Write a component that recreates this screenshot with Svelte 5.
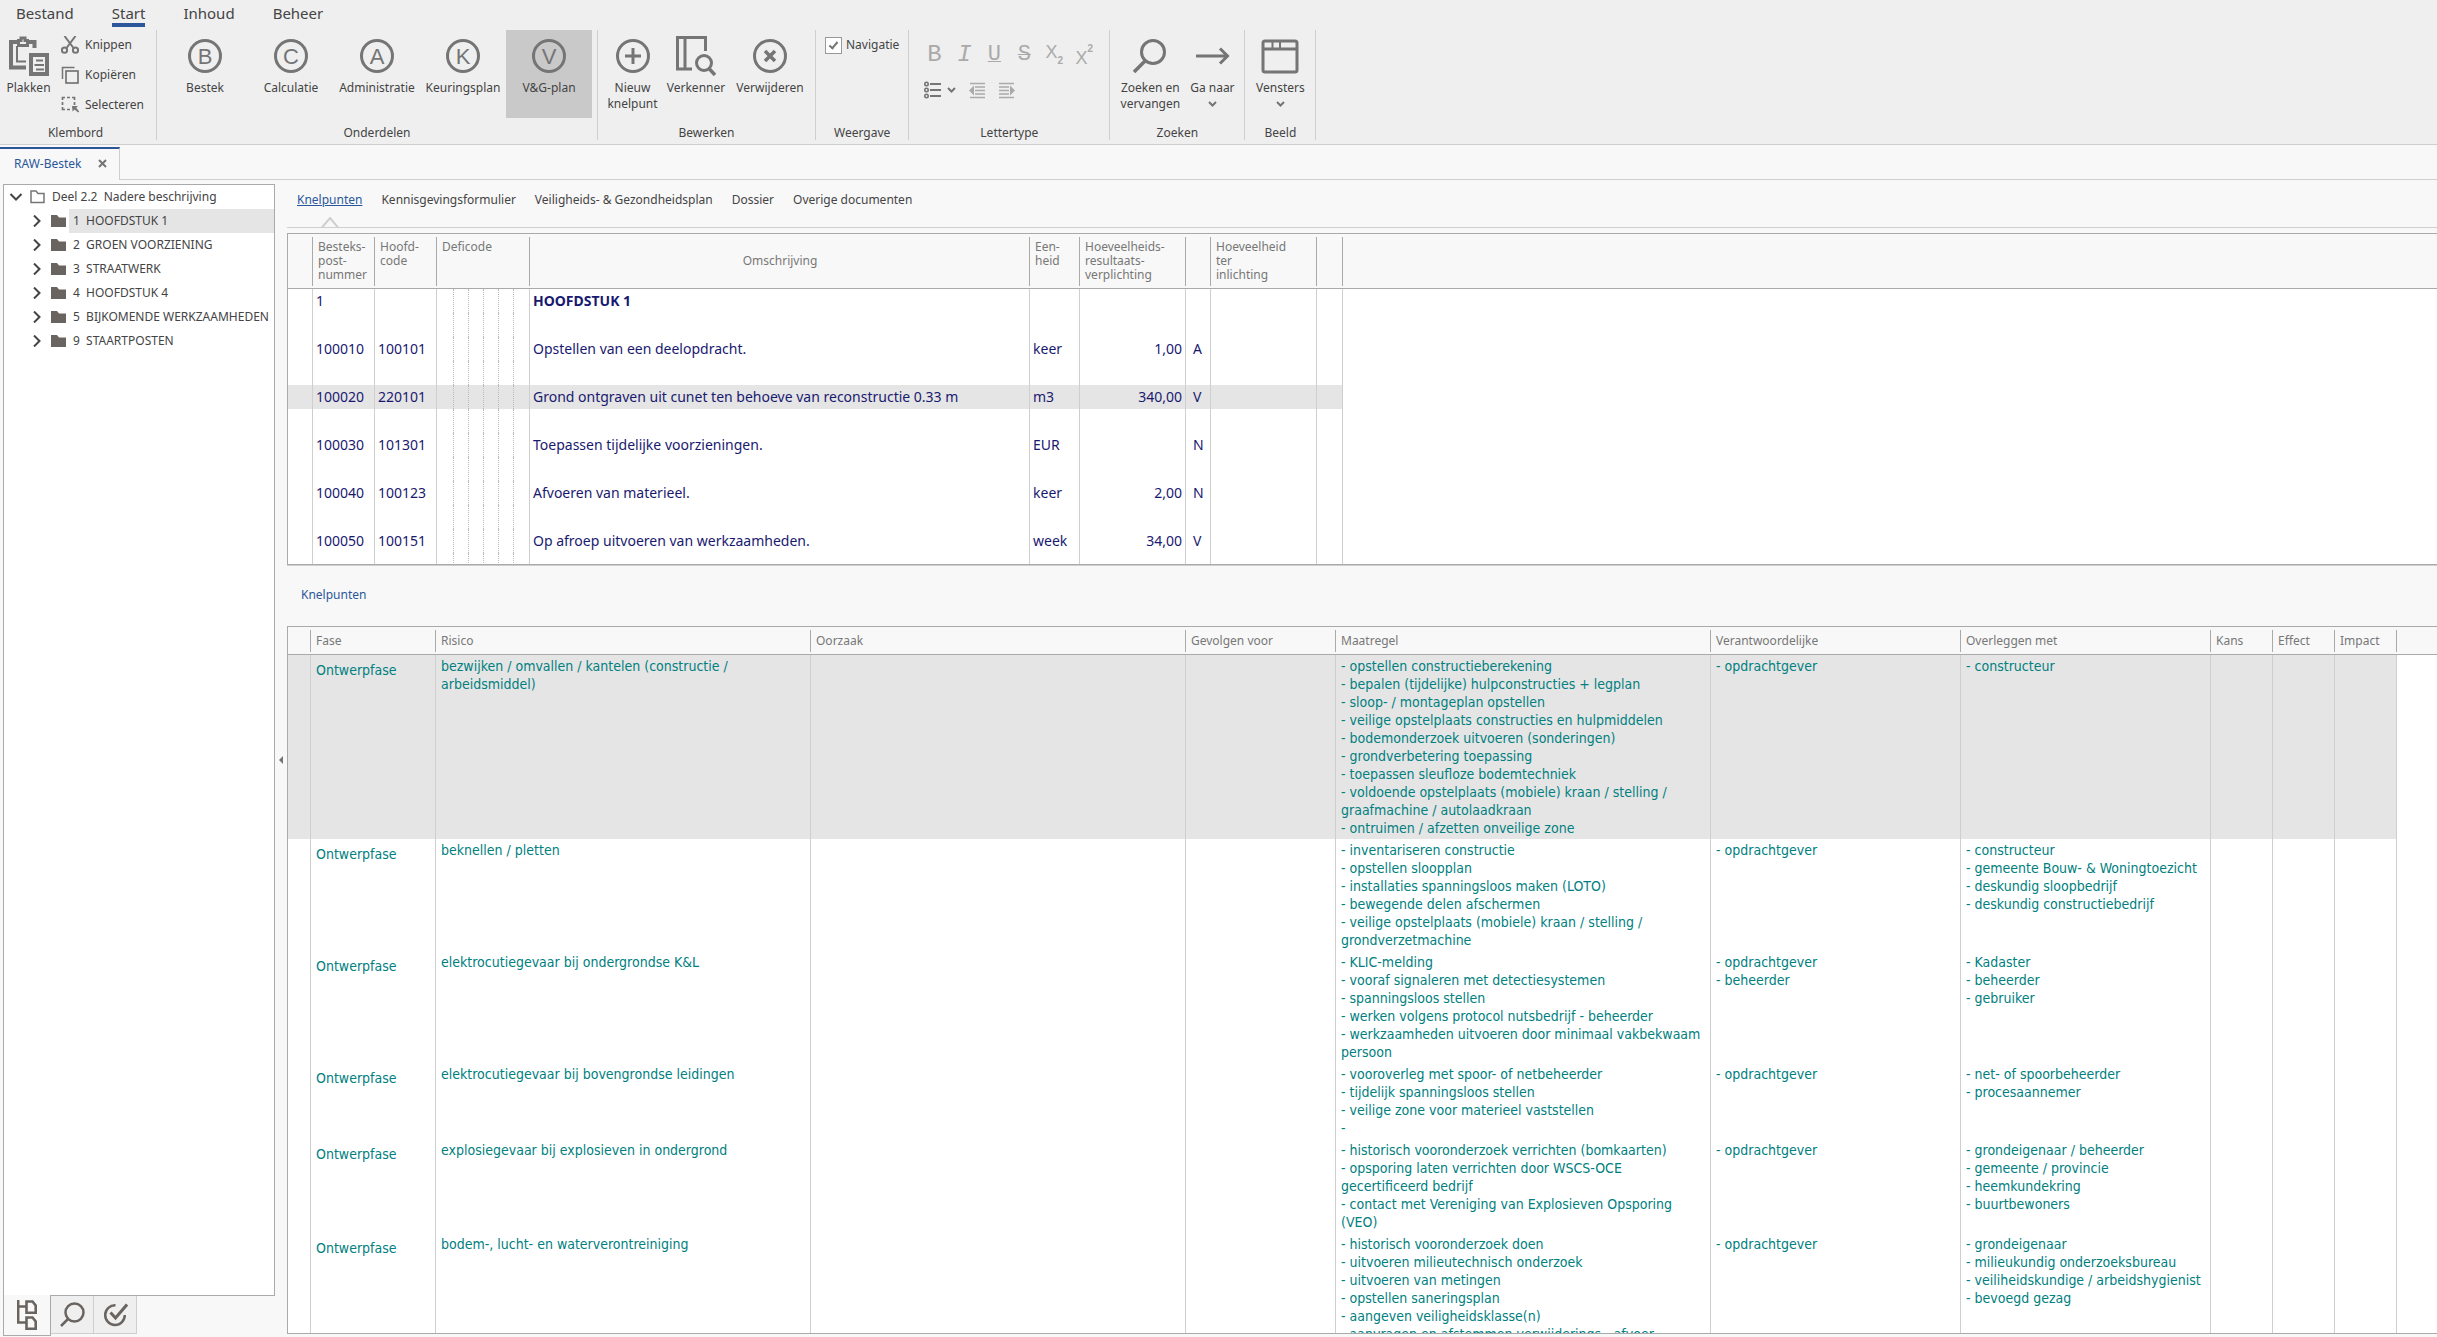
<script>
  const menu = ['Bestand', 'Start', 'Inhoud', 'Beheer'];
  const parts = [
    { letter: 'B', label: 'Bestek' },
    { letter: 'C', label: 'Calculatie' },
    { letter: 'A', label: 'Administratie' },
    { letter: 'K', label: 'Keuringsplan' },
    { letter: 'V', label: 'V&G-plan' }
  ];
  const chapters = [
    ['1', 'HOOFDSTUK 1'],
    ['2', 'GROEN VOORZIENING'],
    ['3', 'STRAATWERK'],
    ['4', 'HOOFDSTUK 4'],
    ['5', 'BIJKOMENDE WERKZAAMHEDEN'],
    ['9', 'STAARTPOSTEN']
  ];
  const sections = ['Knelpunten', 'Kennisgevingsformulier', 'Veiligheids- & Gezondheidsplan', 'Dossier', 'Overige documenten'];

  const postWidths = [25, 62, 62, 17, 15, 15, 15, 15, 16, 500, 50, 106, 25, 106, 26];
  const posts = [
    { nr: '1', code: '', text: 'HOOFDSTUK 1', unit: '', qty: '', kind: '', head: true },
    { nr: '100010', code: '100101', text: 'Opstellen van een deelopdracht.', unit: 'keer', qty: '1,00', kind: 'A' },
    { nr: '100020', code: '220101', text: 'Grond ontgraven uit cunet ten behoeve van reconstructie 0.33 m', unit: 'm3', qty: '340,00', kind: 'V' },
    { nr: '100030', code: '101301', text: 'Toepassen tijdelijke voorzieningen.', unit: 'EUR', qty: '', kind: 'N' },
    { nr: '100040', code: '100123', text: 'Afvoeren van materieel.', unit: 'keer', qty: '2,00', kind: 'N' },
    { nr: '100050', code: '100151', text: 'Op afroep uitvoeren van werkzaamheden.', unit: 'week', qty: '34,00', kind: 'V' }
  ];
  let selectedPost = $state('100020');

  const riskWidths = [23, 125, 375, 375, 150, 375, 250, 250, 62, 62, 62];
  const riskHeads = ['', 'Fase', 'Risico', 'Oorzaak', 'Gevolgen voor', 'Maatregel', 'Verantwoordelijke', 'Overleggen met', 'Kans', 'Effect', 'Impact'];
  const risks = [
    {
      risk: 'bezwijken / omvallen / kantelen (constructie / arbeidsmiddel)',
      measures: ['- opstellen constructieberekening', '- bepalen (tijdelijke) hulpconstructies + legplan', '- sloop- / montageplan opstellen', '- veilige opstelplaats constructies en hulpmiddelen', '- bodemonderzoek uitvoeren (sonderingen)', '- grondverbetering toepassing', '- toepassen sleufloze bodemtechniek', '- voldoende opstelplaats (mobiele) kraan / stelling / graafmachine / autolaadkraan', '- ontruimen / afzetten onveilige zone'],
      owners: ['- opdrachtgever'],
      consult: ['- constructeur']
    },
    {
      risk: 'beknellen / pletten',
      measures: ['- inventariseren constructie', '- opstellen sloopplan', '- installaties spanningsloos maken (LOTO)', '- bewegende delen afschermen', '- veilige opstelplaats (mobiele) kraan / stelling / grondverzetmachine'],
      owners: ['- opdrachtgever'],
      consult: ['- constructeur', '- gemeente Bouw- & Woningtoezicht', '- deskundig sloopbedrijf', '- deskundig constructiebedrijf']
    },
    {
      risk: 'elektrocutiegevaar bij ondergrondse K&L',
      measures: ['- KLIC-melding', '- vooraf signaleren met detectiesystemen', '- spanningsloos stellen', '- werken volgens protocol nutsbedrijf - beheerder', '- werkzaamheden uitvoeren door minimaal vakbekwaam persoon'],
      owners: ['- opdrachtgever', '- beheerder'],
      consult: ['- Kadaster', '- beheerder', '- gebruiker']
    },
    {
      risk: 'elektrocutiegevaar bij bovengrondse leidingen',
      measures: ['- vooroverleg met spoor- of netbeheerder', '- tijdelijk spanningsloos stellen', '- veilige zone voor materieel vaststellen', '-'],
      owners: ['- opdrachtgever'],
      consult: ['- net- of spoorbeheerder', '- procesaannemer']
    },
    {
      risk: 'explosiegevaar bij explosieven in ondergrond',
      measures: ['- historisch vooronderzoek verrichten (bomkaarten)', '- opsporing laten verrichten door WSCS-OCE gecertificeerd bedrijf', '- contact met Vereniging van Explosieven Opsporing (VEO)'],
      owners: ['- opdrachtgever'],
      consult: ['- grondeigenaar / beheerder', '- gemeente / provincie', '- heemkundekring', '- buurtbewoners']
    },
    {
      risk: 'bodem-, lucht- en waterverontreiniging',
      measures: ['- historisch vooronderzoek doen', '- uitvoeren milieutechnisch onderzoek', '- uitvoeren van metingen', '- opstellen saneringsplan', '- aangeven veiligheidsklasse(n)', '- aanvragen en afstemmen verwijderings-, afvoer'],
      owners: ['- opdrachtgever'],
      consult: ['- grondeigenaar', '- milieukundig onderzoeksbureau', '- veiliheidskundige / arbeidshygienist', '- bevoegd gezag']
    }
  ];
  let selectedRisk = $state(0);
  let showNav = $state(true);
</script>

{#snippet down()}
  <svg class="down" width="9" height="6" viewBox="0 0 9 6"><path d="M1 1l3.500 3.500L8 1" stroke-width="2" /></svg>
{/snippet}

<div class="app">
  <header class="ribbon">
    <nav class="menu">
      {#each menu as item}
        <button class:active={item === 'Start'}>{item}</button>
      {/each}
    </nav>

    <div class="groups">
      <section class="group">
        <div class="tools">
          <button class="big paste">
            <svg width="40" height="40" viewBox="0 0 40 40">
              <path d="M17 31.500H2V6H8M19 6h6.500V12" stroke-width="4" />
              <path d="M8 10v15.500H17" stroke-width="2" />
              <path d="M9.500 9.500V4.500H12V2h4v2.500h2.500V9.500z" stroke-width="3" />
              <rect x="22" y="19" width="16" height="19" stroke-width="4" />
              <path d="M27 24.500h7M25.500 29h9.500M27 33.500h8" stroke-width="2" />
            </svg>
            <span>Plakken</span>
          </button>
          <div class="list">
            <button>
              <svg width="18" height="18" viewBox="0 0 18 18">
                <path d="M3.500 0l9 12M14.500 0l-9 12" stroke-width="2" />
                <circle cx="3.500" cy="14.200" r="2.600" stroke-width="2" /><circle cx="14.500" cy="14.200" r="2.600" stroke-width="2" />
              </svg>
              <span>Knippen</span>
            </button>
            <button>
              <svg width="18" height="18" viewBox="0 0 18 18">
                <path d="M1.500 13V1.500h12" stroke-width="1.500" /><rect x="5" y="5" width="12" height="12" stroke-width="1.700" />
              </svg>
              <span>Kopiëren</span>
            </button>
            <button>
              <svg width="18" height="18" viewBox="0 0 18 18">
                <path d="M1.500 4V1.500h2.500M6 1.500h3M11 1.500h2.500v2.500M13.500 6v3M1.500 6v3M1.500 11v2.500h2.500M6 13.500h3" stroke-width="1.700" />
                <path class="solid" d="M11 10h6l-1.800 1.800 3 3.800-1 1-3.600-3.200-2 2z" />
              </svg>
              <span>Selecteren</span>
            </button>
          </div>
        </div>
        <h2>Klembord</h2>
      </section>

      <section class="group">
        <div class="tools">
          {#each parts as part}
            <button class="big part" class:chosen={part.letter === 'V'}>
              <svg width="40" height="40" viewBox="0 0 40 40">
                <circle cx="20" cy="20" r="15.500" stroke-width="3" />
                <text x="20" y="27.500" text-anchor="middle">{part.letter}</text>
              </svg>
              <span>{part.label}</span>
            </button>
          {/each}
        </div>
        <h2>Onderdelen</h2>
      </section>

      <section class="group">
        <div class="tools">
          <button class="big create">
            <svg width="40" height="40" viewBox="0 0 40 40">
              <circle cx="20" cy="20" r="15.500" stroke-width="3" /><path d="M20 12v16M12 20h16" stroke-width="3" />
            </svg>
            <span>Nieuw knelpunt</span>
          </button>
          <button class="big explore">
            <svg width="40" height="40" viewBox="0 0 40 40">
              <path d="M16 33H1.500V1.500h28V15M9 2v31" stroke-width="3" />
              <circle cx="28" cy="27" r="7.500" stroke-width="3" /><path d="M33 32.500l6 6.500" stroke-width="3.500" />
            </svg>
            <span>Verkenner</span>
          </button>
          <button class="big remove">
            <svg width="40" height="40" viewBox="0 0 40 40">
              <circle cx="20" cy="20" r="15.500" stroke-width="3" /><path d="M15 15l10 10M25 15L15 25" stroke-width="3.500" />
            </svg>
            <span>Verwijderen</span>
          </button>
        </div>
        <h2>Bewerken</h2>
      </section>

      <section class="group">
        <div class="tools">
          <label class="check">
            <input type="checkbox" bind:checked={showNav} />
            <span>Navigatie</span>
          </label>
        </div>
        <h2>Weergave</h2>
      </section>

      <section class="group">
        <div class="tools fonts">
          <div class="row letters">
            <button>B</button>
            <button><i>I</i></button>
            <button class="under">U</button>
            <button class="strike">S</button>
            <button class="thin">X<sub>2</sub></button>
            <button class="thin low">X<sup>2</sup></button>
          </div>
          <div class="row lists">
            <button aria-label="Opsomming">
              <svg width="17" height="18" viewBox="0 0 17 18">
                <circle cx="2.500" cy="3" r="1.700" stroke-width="1.600" /><circle cx="2.500" cy="9" r="1.700" stroke-width="1.600" /><circle cx="2.500" cy="15" r="1.700" stroke-width="1.600" />
                <path d="M6 3h11M6 9h11M6 15h11" stroke-width="2" />
              </svg>
              {@render down()}
            </button>
            <button class="pale" aria-label="Minder inspringen">
              <svg width="17" height="17" viewBox="0 0 17 17">
                <path d="M1 1.500h15M6 5h10M6 8.500h10M6 12h10M1 15.500h15" stroke-width="1.600" /><path class="solid" d="M5 3.500v10L0 8.500z" />
              </svg>
            </button>
            <button class="pale" aria-label="Meer inspringen">
              <svg width="17" height="17" viewBox="0 0 17 17">
                <path d="M0 1.500h15M0 5h10M0 8.500h10M0 12h10M0 15.500h15" stroke-width="1.600" /><path class="solid" d="M11 3.500v10l5-5z" />
              </svg>
            </button>
          </div>
        </div>
        <h2>Lettertype</h2>
      </section>

      <section class="group">
        <div class="tools">
          <button class="big find">
            <svg width="40" height="40" viewBox="0 0 40 40">
              <circle cx="23" cy="16" r="11.500" stroke-width="3" /><path d="M15 25L4 36" stroke-width="3.500" />
            </svg>
            <span>Zoeken en vervangen</span>
          </button>
          <button class="big goto">
            <svg width="40" height="40" viewBox="0 0 40 40">
              <path d="M4 20h31M28 12.500l7.500 7.500-7.500 7.500" stroke-width="3" />
            </svg>
            <span>Ga naar</span>
            {@render down()}
          </button>
        </div>
        <h2>Zoeken</h2>
      </section>

      <section class="group">
        <div class="tools">
          <button class="big windows">
            <svg width="40" height="40" viewBox="0 0 40 40">
              <rect x="3" y="5" width="34" height="31" rx="2" stroke-width="3" /><path d="M3 13h34" stroke-width="3" /><path d="M12.500 5v7M20 5v7" stroke-width="2" />
            </svg>
            <span>Vensters</span>
            {@render down()}
          </button>
        </div>
        <h2>Beeld</h2>
      </section>
    </div>
  </header>

  <div class="doctabs">
    <div class="doctab">
      <a href="#bestek">RAW-Bestek</a>
      <button aria-label="Sluiten"><svg width="9" height="9" viewBox="0 0 9 9"><path d="M1 1l7 7M8 1L1 8" stroke-width="2" /></svg></button>
    </div>
  </div>

  <div class="work">
    <aside>
      <div class="tree">
        <button class="node root">
          <svg class="dark" width="14" height="8" viewBox="0 0 14 8"><path d="M1.500 1L7 6.500 12.500 1" stroke-width="2" /></svg>
          <svg width="15" height="14" viewBox="0 0 15 14"><path d="M1 12.500V1h5l2 2.500h6v9z" stroke-width="1.500" /></svg>
          <span class="name">Deel 2.2&nbsp; Nadere beschrijving</span>
        </button>
        {#each chapters as [nr, name]}
          <button class="node">
            <svg class="dark" width="8" height="12" viewBox="0 0 8 12"><path d="M1 .5L6.500 6 1 11.500" stroke-width="2" /></svg>
            <svg class="filled" width="15" height="12" viewBox="0 0 15 12"><path d="M0 12V0h6l2 2.500h7V12z" /></svg>
            <span class="name" class:on={nr === '1'}>{nr}&nbsp; {name}</span>
          </button>
        {/each}
      </div>
      <div class="views">
        <button class="front" aria-label="Structuur">
          <svg width="20" height="30" viewBox="0 0 20 30">
            <path d="M1.200 0v22.500H9M1.200 6.500H9" stroke-width="2.500" />
            <path d="M9.500 1.500h6l3.200 4v7.200H9.500zM9.500 17.500h6l3.200 4v7.200H9.500z" stroke-width="2.600" />
          </svg>
        </button>
        <button aria-label="Zoeken">
          <svg width="25" height="25" viewBox="0 0 25 25"><circle cx="14.500" cy="10.500" r="9" stroke-width="2.500" /><path d="M8 17l-7 7" stroke-width="2.500" /></svg>
        </button>
        <button aria-label="Controle">
          <svg width="25" height="25" viewBox="0 0 25 25"><path d="M12.500 3.300A9.800 9.800 0 1 0 21.800 13" stroke-width="2.500" /><path d="M7.500 10.500l5 5.500L24 2.500" stroke-width="3" /></svg>
        </button>
      </div>
    </aside>

    <div class="split"><svg width="4" height="8" viewBox="0 0 4 8"><path class="solid" d="M4 0v8L0 4z" /></svg></div>

    <main>
      <nav class="sections">
        {#each sections as name}
          <a href="#sectie" class:current={name === 'Knelpunten'}>
            {name}
            {#if name === 'Knelpunten'}
              <svg class="notch" width="18" height="11" viewBox="0 0 18 11"><path d="M1 10.500L9 1l8 9.500" /></svg>
            {/if}
          </a>
        {/each}
      </nav>

      <div class="grid posts">
        <table>
          <colgroup>
            {#each postWidths as w}<col style="width:{w}px" />{/each}
            <col />
          </colgroup>
          <thead>
            <tr>
              <th></th><th>Besteks-<br />post-<br />nummer</th><th>Hoofd-<br />code</th><th colspan="6">Deficode</th>
              <th class="mid">Omschrijving</th><th>Een-<br />heid</th><th>Hoeveelheids-<br />resultaats-<br />verplichting</th><th></th>
              <th>Hoeveelheid<br />ter<br />inlichting</th><th></th><th class="rest"></th>
            </tr>
          </thead>
          <tbody>
            {#each posts as p}
              <tr class:selected={p.nr === selectedPost} onclick={() => (selectedPost = p.nr)}>
                <td></td><td>{p.nr}</td><td>{p.code}</td>
                <td class="dot"></td><td class="dot"></td><td class="dot"></td><td class="dot"></td><td class="dot"></td><td></td>
                <td class:strong={p.head}>{p.text}</td><td>{p.unit}</td><td class="num">{p.qty}</td><td class="kind">{p.kind}</td><td></td><td></td><td class="rest"></td>
              </tr>
              <tr>
                <td></td><td></td><td></td>
                <td class="dot"></td><td class="dot"></td><td class="dot"></td><td class="dot"></td><td class="dot"></td><td></td>
                <td></td><td></td><td></td><td></td><td></td><td></td><td class="rest"></td>
              </tr>
            {/each}
          </tbody>
        </table>
      </div>

      <h3>Knelpunten</h3>

      <div class="grid risks">
        <table>
          <colgroup>
            {#each riskWidths as w}<col style="width:{w}px" />{/each}
            <col />
          </colgroup>
          <thead>
            <tr>
              {#each riskHeads as h}<th>{h}</th>{/each}
              <th class="rest"></th>
            </tr>
          </thead>
          <tbody>
            {#each risks as r, i}
              <tr class:selected={i === selectedRisk} onclick={() => (selectedRisk = i)}>
                <td></td>
                <td class="phase">Ontwerpfase</td>
                <td>{r.risk}</td>
                <td></td><td></td>
                <td>{#each r.measures as m}<div>{m}</div>{/each}</td>
                <td>{#each r.owners as o}<div>{o}</div>{/each}</td>
                <td>{#each r.consult as c}<div>{c}</div>{/each}</td>
                <td></td><td></td><td></td><td class="rest"></td>
              </tr>
            {/each}
          </tbody>
        </table>
      </div>
    </main>
  </div>
</div>

<style>
  :global(body) {
    background: #f8f8f8;
  }
  .app {
    height: 100vh;
    display: flex;
    flex-direction: column;
    overflow: hidden;
    box-sizing: border-box;
    padding-bottom: 1px;
    font-family: 'Noto Sans', 'DejaVu Sans Condensed', sans-serif;
    font-size: 12px;
    line-height: 16px;
    color: #444;
  }
  button {
    font: inherit;
    color: inherit;
    background: none;
    border: 0;
    padding: 0;
    margin: 0;
  }
  a {
    color: inherit;
    text-decoration: none;
  }
  svg {
    display: block;
    flex: none;
    fill: none;
    stroke: #757575;
  }
  svg .solid {
    fill: #757575;
    stroke: none;
  }
  svg text {
    fill: #757575;
    stroke: none;
    font: 22px 'Liberation Sans', sans-serif;
  }
  h2,
  h3 {
    margin: 0;
    font-size: 12px;
    font-weight: normal;
  }

  .ribbon {
    background: #efefef;
    border-bottom: 1px solid #cfcfcf;
  }
  .menu {
    display: flex;
    gap: 38px;
    padding: 0 16px;
    font-size: 15px;
  }
  .menu button {
    height: 27px;
    line-height: 26px;
    box-sizing: border-box;
    border-bottom: 4px solid transparent;
    display: flex;
  }
  .menu .active {
    border-color: #2b579a;
  }
  .groups {
    display: flex;
    padding: 3px 0 4px;
  }
  .group {
    display: flex;
    flex-direction: column;
    justify-content: space-between;
    height: 110px;
    padding: 0 5px;
    box-sizing: border-box;
    border-right: 1px solid #cfcfcf;
    text-align: center;
  }
  .group:first-child {
    padding-left: 0;
  }
  .group h2 {
    line-height: 14px;
  }
  .tools {
    display: flex;
  }
  .big {
    display: flex;
    flex-direction: column;
    align-items: center;
    height: 88px;
    padding-top: 6px;
    box-sizing: border-box;
  }
  .big span {
    margin-top: 4px;
    line-height: 16px;
  }
  .big .down {
    margin-top: 5px;
  }
  .paste {
    width: 57px;
  }
  .part {
    width: 86px;
  }
  .chosen {
    background: #c9c9c9;
  }
  .create { width: 59px; }
  .explore { width: 68px; }
  .remove { width: 80px; }
  .find { width: 70px; }
  .goto { width: 54px; }
  .windows { width: 60px; }
  .list {
    display: flex;
    flex-direction: column;
    width: 94px;
    padding-left: 4px;
    box-sizing: border-box;
  }
  .list button {
    display: flex;
    align-items: center;
    gap: 6px;
    height: 30px;
  }
  .check {
    display: flex;
    align-items: center;
    gap: 4px;
    height: 30px;
    padding: 0 4px;
  }
  .check input {
    appearance: none;
    width: 17px;
    height: 17px;
    box-sizing: border-box;
    margin: 0;
    border: 1px solid #999;
    background: #fff;
    display: grid;
    place-items: center;
  }
  .check input:checked::before {
    content: '';
    width: 3px;
    height: 7px;
    margin-bottom: 2px;
    border: solid #757575;
    border-width: 0 2px 2px 0;
    rotate: 40deg;
  }
  .fonts {
    flex-direction: column;
    width: 190px;
    padding-top: 10px;
  }
  .row {
    display: flex;
    align-items: center;
    height: 30px;
    padding-left: 5px;
  }
  .letters button {
    width: 30px;
    color: #aaa;
    font: 24px/30px 'Liberation Mono', monospace;
  }
  .letters .under {
    font-size: 22px;
    text-decoration: underline;
    text-decoration-thickness: 1px;
  }
  .letters .strike {
    font-size: 22px;
    text-decoration: line-through;
    text-decoration-thickness: 1px;
  }
  .letters .thin {
    display: flex;
    justify-content: center;
    padding-bottom: 6px;
    font: 18px/20px 'Liberation Sans', sans-serif;
  }
  .letters .low {
    padding: 6px 0 0;
  }
  .letters sub,
  .letters sup {
    font-size: 10px;
    font-weight: 700;
    line-height: 10px;
  }
  .letters sub {
    align-self: flex-end;
    margin-bottom: -4px;
  }
  .letters sup {
    align-self: flex-start;
    margin-top: -4px;
  }
  .lists {
    height: 40px;
    gap: 13px;
    padding-left: 10px;
  }
  .lists button {
    display: flex;
    align-items: center;
    gap: 6px;
  }
  .pale svg {
    stroke: #aaa;
  }
  .pale .solid {
    fill: #aaa;
  }

  .doctabs {
    display: flex;
    padding-top: 2px;
    border-bottom: 1px solid #cfcfcf;
  }
  .doctab {
    display: flex;
    align-items: center;
    gap: 16px;
    height: 33px;
    margin-bottom: -1px;
    padding: 0 12px 2px 14px;
    box-sizing: border-box;
    border-top: 2px solid #2b579a;
    border-right: 1px solid #cfcfcf;
    background: #f8f8f8;
    color: #2b579a;
  }

  .work {
    flex: 1;
    display: flex;
    min-height: 0;
    padding: 4px 0 0 3px;
  }
  aside {
    display: flex;
    flex-direction: column;
    width: 272px;
    flex: none;
  }
  .tree {
    flex: 1;
    border: 1px solid #aaa;
    background: #fff;
    overflow: hidden;
  }
  .node {
    display: flex;
    align-items: center;
    width: 100%;
    height: 24px;
    padding-left: 29px;
    white-space: nowrap;
  }
  .root {
    padding-left: 5px;
  }
  .dark {
    stroke: #444;
  }
  .node svg + svg {
    margin-left: 7px;
  }
  .node:not(.root) svg + svg {
    margin-left: 10px;
  }
  .filled {
    fill: #6a6460;
    stroke: none;
  }
  .name {
    flex: 1;
    margin-left: 3px;
    padding-left: 4px;
    line-height: 24px;
    text-align: left;
  }
  .on {
    background: #e5e5e5;
  }
  .views {
    display: flex;
    align-items: flex-start;
    height: 40px;
  }
  .views button {
    display: grid;
    place-items: center;
    width: 43px;
    height: 38px;
    box-sizing: border-box;
    border: 1px solid #cfcfcf;
    border-top: 0;
    border-left: 0;
    background: #efefef;
  }
  .views .front {
    width: 48px;
    height: 41px;
    margin-top: -1px;
    border-color: #aaa;
    border-left: 1px solid #aaa;
    background: #f8f8f8;
  }
  .views svg {
    stroke: #6a6460;
  }
  .split {
    width: 12px;
    display: grid;
    place-items: center;
  }

  main {
    flex: 1;
    min-width: 0;
    display: flex;
    flex-direction: column;
  }
  .sections {
    display: flex;
    gap: 19px;
    height: 44px;
    padding: 8px 10px 0;
    box-sizing: border-box;
    border-bottom: 1px solid #cfcfcf;
  }
  .sections a {
    position: relative;
    line-height: 16px;
  }
  .current {
    color: #2b579a;
    text-decoration: underline;
  }
  .notch {
    position: absolute;
    left: 50%;
    bottom: -1px;
    margin-left: -9px;
    stroke: #cfcfcf;
    stroke-width: 2;
  }
  .grid {
    overflow: hidden;
    box-sizing: border-box;
    border: solid #aaa;
    border-width: 1px 0 1px 1px;
    background: #fff;
  }
  .posts {
    flex: none;
    height: 332px;
    margin-top: 5px;
    box-shadow: 0 1px #cfcfcf;
    color: #191970;
  }
  h3 {
    padding: 22px 14px 23px;
    color: #2b579a;
  }
  .risks {
    flex: 1;
    min-height: 0;
    margin-bottom: 2px;
    color: #008080;
  }
  table {
    width: 100%;
    table-layout: fixed;
    border-spacing: 0;
    font-size: 14px;
    line-height: 18px;
  }
  th {
    height: 27px;
    padding: 0 5px;
    box-sizing: content-box;
    border-bottom: 1px solid #aaa;
    background: linear-gradient(#aaa, #aaa) right center / 1px calc(100% - 5px) no-repeat #f8f8f8;
    color: #777;
    font-size: 12px;
    font-weight: normal;
    line-height: 14px;
    text-align: left;
    white-space: nowrap;
  }
  .posts th {
    height: 48px;
    padding: 6px 5px 0;
    vertical-align: top;
  }
  .posts th.mid {
    padding: 0;
    vertical-align: middle;
    text-align: center;
  }
  td {
    padding: 2px 5px;
    border-right: 1px solid #cfcfcf;
    vertical-align: top;
  }
  .risks td {
    font-family: 'DejaVu Sans Condensed', 'Noto Sans', sans-serif;
  }
  .posts td {
    height: 24px;
    box-sizing: border-box;
    padding: 0 3px;
    vertical-align: middle;
    white-space: nowrap;
  }
  .posts td.dot {
    padding: 0;
    border-right: 1px dotted #bbb;
  }
  .posts td.num {
    text-align: right;
  }
  .posts td.kind {
    padding-left: 7px;
  }
  .strong {
    font-weight: bold;
  }
  .risks td.phase {
    padding-top: 6px;
  }
  .selected td:not(.rest) {
    background: #e5e5e5;
  }
  .grid th.rest {
    background: #f8f8f8;
  }
  .grid td.rest {
    border-right: 0;
  }
</style>
